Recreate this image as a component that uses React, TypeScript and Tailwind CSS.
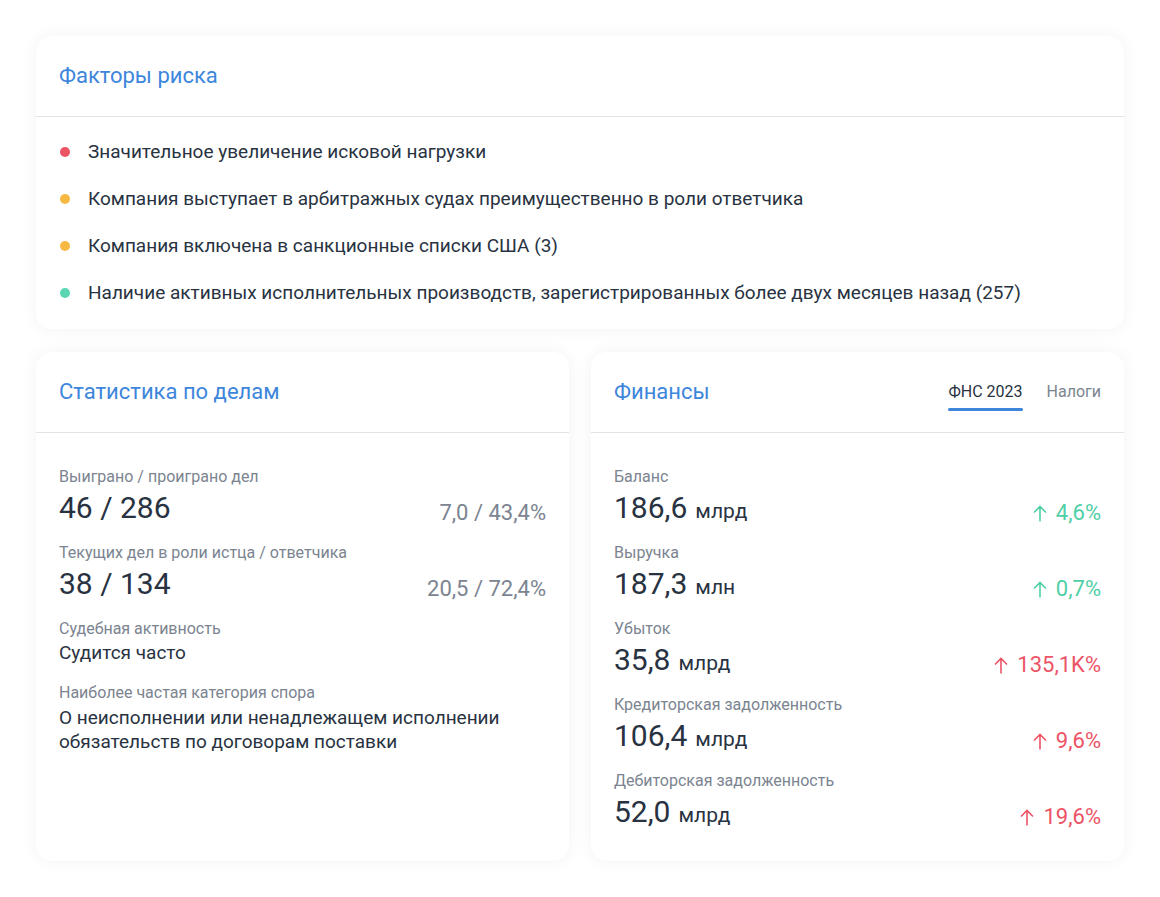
import React from "react";

const risks = [
  { color: "bg-[#ec5466]", text: "Значительное увеличение исковой нагрузки" },
  { color: "bg-[#f7b944]", text: "Компания выступает в арбитражных судах преимущественно в роли ответчика" },
  { color: "bg-[#f7b944]", text: "Компания включена в санкционные списки США (3)" },
  { color: "bg-[#5ad6b4]", text: "Наличие активных исполнительных производств, зарегистрированных более двух месяцев назад (257)" },
];

const finances = [
  { label: "Баланс", value: "186,6", unit: "млрд", change: "4,6%", good: true },
  { label: "Выручка", value: "187,3", unit: "млн", change: "0,7%", good: true },
  { label: "Убыток", value: "35,8", unit: "млрд", change: "135,1K%", good: false },
  { label: "Кредиторская задолженность", value: "106,4", unit: "млрд", change: "9,6%", good: false },
  { label: "Дебиторская задолженность", value: "52,0", unit: "млрд", change: "19,6%", good: false },
];

function Card({ children, className = "" }: { children: React.ReactNode; className?: string }) {
  return (
    <div className={`bg-white rounded-2xl shadow-[0_0_18px_rgba(0,0,0,0.05)] overflow-hidden ${className}`}>
      {children}
    </div>
  );
}

function ArrowUp() {
  return (
    <svg width="14" height="17" viewBox="0 0 14 17" fill="none" stroke="currentColor" strokeWidth="1.6" className="mr-[9px] self-center">
      <path d="M7 16.5V1.5M1 7.5l6-6 6 6" />
    </svg>
  );
}

function Stat({ label, value, side }: { label: string; value: string; side: string }) {
  return (
    <div className="h-[76px]">
      <div className="text-[16px] leading-[20px] text-[#7b8490]">{label}</div>
      <div className="flex items-baseline justify-between mt-[3px]">
        <span className="text-[30px] leading-[36px]">{value}</span>
        <span className="text-[22px] leading-[28px] text-[#7b8490] relative top-[2px]">{side}</span>
      </div>
    </div>
  );
}

export default function App() {
  return (
    <div
      className="min-h-[897px] w-[1160px] bg-white p-[36px] text-[#283241]"
      style={{ fontFamily: "Roboto, 'Noto Sans', sans-serif" }}
    >
      <Card>
        <div className="h-[81px] px-[23px] flex items-center border-b border-[#e2e4e8]">
          <h2 className="text-[22px] text-[#3d86dc] leading-none">Факторы риска</h2>
        </div>
        <ul className="px-[23px] pt-[23px] pb-[24px] flex flex-col gap-[23px]">
          {risks.map((r, i) => (
            <li key={i} className="flex items-center h-[24px]">
              <span className={`w-[10px] h-[10px] rounded-full ${r.color} ml-[1px] mr-[18px]`} />
              <span className="text-[19px] leading-[24px]">{r.text}</span>
            </li>
          ))}
        </ul>
      </Card>

      <div className="mt-[23px] grid grid-cols-2 gap-[22px]">
        <Card className="h-[509px]">
          <div className="h-[81px] px-[23px] flex items-center border-b border-[#e2e4e8]">
            <h2 className="text-[22px] text-[#3d86dc] leading-none">Статистика по делам</h2>
          </div>
          <div className="px-[23px] pt-[34px]">
            <Stat label="Выиграно / проиграно дел" value="46 / 286" side="7,0 / 43,4%" />
            <Stat label="Текущих дел в роли истца / ответчика" value="38 / 134" side="20,5 / 72,4%" />
            <div className="h-[64px]">
              <div className="text-[16px] leading-[20px] text-[#7b8490]">Судебная активность</div>
              <div className="text-[19px] leading-[26px] mt-[1px]">Судится часто</div>
            </div>
            <div>
              <div className="text-[16px] leading-[20px] text-[#7b8490]">Наиболее частая категория спора</div>
              <div className="text-[19px] leading-[24px] mt-[3px]">
                О неисполнении или ненадлежащем исполнении
                <br />
                обязательств по договорам поставки
              </div>
            </div>
          </div>
        </Card>

        <Card className="h-[509px]">
          <div className="h-[81px] px-[23px] flex items-center justify-between border-b border-[#e2e4e8]">
            <h2 className="text-[22px] text-[#3d86dc] leading-none">Финансы</h2>
            <div className="flex items-center gap-[24px] text-[16px] self-stretch">
              <div className="relative h-full flex items-center">
                <span className="text-[#283241]">ФНС 2023</span>
                <span className="absolute left-0 right-0 top-[56px] h-[3px] rounded-full bg-[#3d86dc]" />
              </div>
              <span className="text-[#7b8490]">Налоги</span>
            </div>
          </div>
          <div className="px-[23px] pt-[34px]">
            {finances.map((f, i) => (
              <div key={i} className="h-[76px]">
                <div className="text-[16px] leading-[20px] text-[#7b8490]">{f.label}</div>
                <div className="flex items-baseline justify-between mt-[3px]">
                  <span className="leading-[36px]">
                    <span className="text-[30px]">{f.value}</span>
                    <span className="text-[21px] ml-[8px]">{f.unit}</span>
                  </span>
                  <span
                    className={`flex items-baseline text-[22px] leading-[28px] relative top-[2px] ${
                      f.good ? "text-[#4fcfa6]" : "text-[#ec5466]"
                    }`}
                  >
                    <ArrowUp />
                    {f.change}
                  </span>
                </div>
              </div>
            ))}
          </div>
        </Card>
      </div>
    </div>
  );
}
